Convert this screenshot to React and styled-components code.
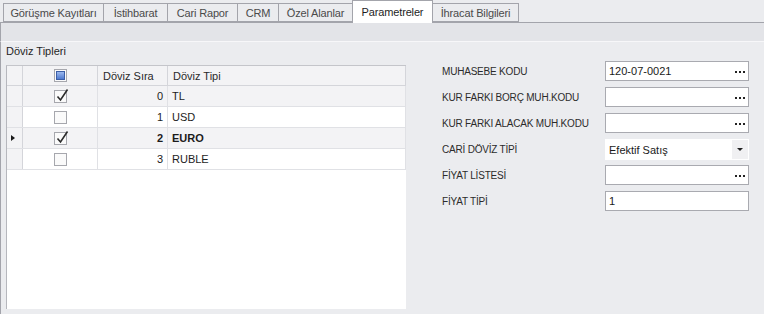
import React from "react";
import styled, { createGlobalStyle } from "styled-components";

const GlobalStyle = createGlobalStyle`
  html, body {
    margin: 0;
    padding: 0;
    background: #ebecef;
  }
  body {
    font-family: "Liberation Sans", Arial, sans-serif;
    font-size: 11px;
    color: #222;
  }
`;

const tabs = [
  { title: "Görüşme Kayıtları", width: 101 },
  { title: "İstihbarat", width: 65 },
  { title: "Cari Rapor", width: 71 },
  { title: "CRM", width: 42 },
  { title: "Özel Alanlar", width: 75 },
  { title: "Parametreler", width: 81 },
  { title: "İhracat Bilgileri", width: 87 },
];

const currencies = [
  { sira: 0, tip: "TL", checked: true },
  { sira: 1, tip: "USD", checked: false },
  { sira: 2, tip: "EURO", checked: true, focused: true },
  { sira: 3, tip: "RUBLE", checked: false },
];

const fields = [
  { label: "MUHASEBE KODU", value: "120-07-0021", kind: "button" },
  { label: "KUR FARKI BORÇ MUH.KODU", value: "", kind: "button" },
  { label: "KUR FARKI ALACAK MUH.KODU", value: "", kind: "button" },
  { label: "CARİ DÖVİZ TİPİ", value: "Efektif Satış", kind: "combo" },
  { label: "FİYAT LİSTESİ", value: "", kind: "button" },
  { label: "FİYAT TİPİ", value: "1", kind: "text" },
];

function App() {
  return (
    <Page>
      <GlobalStyle />
      <TabStrip>
        {tabs.map((t) => (
          <Tab key={t.title} $w={t.width} $active={t.title === "Parametreler"}>
            {t.title}
          </Tab>
        ))}
      </TabStrip>
      <Band />
      <Content>
        <GroupPanel>
          <GroupTitle>Döviz Tipleri</GroupTitle>
          <Grid>
            <HeaderRow>
              <IndicatorCell />
              <HeadCell $center>
                <CheckBox>
                  <BlueFill />
                </CheckBox>
              </HeadCell>
              <HeadCell>Döviz Sıra</HeadCell>
              <HeadCell>Döviz Tipi</HeadCell>
            </HeaderRow>
            {currencies.map((c, i) => (
              <Row key={c.sira} $alt={i % 2 === 0} $bold={c.focused}>
                <IndicatorCell>{c.focused && <Arrow />}</IndicatorCell>
                <Cell $center>
                  <CheckBox>
                    {c.checked && (
                      <svg width="15" height="15" viewBox="0 0 15 15">
                        <path
                          d="M2.5 8.5 L5.5 12 L12.5 1.5"
                          fill="none"
                          stroke="#2b2b2b"
                          strokeWidth="1.6"
                        />
                      </svg>
                    )}
                  </CheckBox>
                </Cell>
                <Cell $right>{c.sira}</Cell>
                <Cell>{c.tip}</Cell>
              </Row>
            ))}
          </Grid>
        </GroupPanel>
        <Form>
          {fields.map((f) => (
            <React.Fragment key={f.label}>
              <Label>{f.label}</Label>
              <Editor $kind={f.kind}>
                <EditorText>{f.value}</EditorText>
                {f.kind === "button" && (
                  <Dots>
                    <i />
                    <i />
                    <i />
                  </Dots>
                )}
                {f.kind === "combo" && (
                  <DropButton>
                    <DownTriangle />
                  </DropButton>
                )}
              </Editor>
            </React.Fragment>
          ))}
        </Form>
      </Content>
    </Page>
  );
}

const Page = styled.div`
  width: 764px;
  height: 314px;
  overflow: hidden;
  background: #ebecef;
`;

const TabStrip = styled.div`
  display: flex;
  align-items: flex-end;
  height: 22px;
  padding-left: 3px;
  border-bottom: 1px solid #a3a4ab;
`;

const Tab = styled.div`
  display: flex;
  align-items: center;
  justify-content: center;
  box-sizing: border-box;
  width: ${(p) => p.$w}px;
  height: ${(p) => (p.$active ? "23px" : "19px")};
  margin-bottom: ${(p) => (p.$active ? "-1px" : "0")};
  margin-left: -1px;
  background: ${(p) => (p.$active ? "#ffffff" : "#ebecef")};
  border: 1px solid #a3a4ab;
  border-bottom: ${(p) => (p.$active ? "none" : "1px solid #a3a4ab")};
  color: ${(p) => (p.$active ? "#1e1e1e" : "#4a4a4a")};
  letter-spacing: -0.15px;
  white-space: nowrap;
  position: relative;
  z-index: ${(p) => (p.$active ? 1 : 0)};
  &:first-child {
    margin-left: 0;
  }
`;

const Band = styled.div`
  height: 18px;
  background: #e3e4e8;
  border-left: 1px solid #a3a4ab;
  border-bottom: 1px solid #f7f7f9;
`;

const Content = styled.div`
  display: flex;
  height: 272px;
  border-left: 1px solid #a3a4ab;
`;

const GroupPanel = styled.div`
  display: flex;
  flex-direction: column;
  padding-left: 5px;
  width: 400px;
`;

const GroupTitle = styled.div`
  height: 22px;
  line-height: 16px;
  padding-top: 1px;
  color: #262626;
`;

const Grid = styled.div`
  height: 244px;
  background: #ffffff;
  border-left: 1px solid #b6b7bd;
  border-top: 1px solid #c4c5ca;
  box-sizing: border-box;
`;

const rowCols = `
  display: grid;
  grid-template-columns: 16px 75px 70px 1fr;
`;

const HeaderRow = styled.div`
  ${rowCols}
  height: 19px;
  background: #f3f3f5;
  border-bottom: 1px solid #d4d5da;
`;

const Row = styled.div`
  ${rowCols}
  height: 20px;
  background: ${(p) => (p.$alt ? "#f3f3f5" : "#ffffff")};
  border-bottom: 1px solid #e0e1e5;
  font-weight: ${(p) => (p.$bold ? "bold" : "normal")};
  color: #1c1c1c;
`;

const IndicatorCell = styled.div`
  display: flex;
  align-items: center;
  justify-content: center;
  background: #f3f3f5;
  border-right: 1px solid #d4d5da;
`;

const HeadCell = styled.div`
  display: flex;
  align-items: center;
  justify-content: ${(p) => (p.$center ? "center" : "flex-start")};
  padding-left: ${(p) => (p.$center ? "0" : "5px")};
  border-right: 1px solid #d4d5da;
  color: #2a2a2a;
`;

const Cell = styled.div`
  display: flex;
  align-items: center;
  justify-content: ${(p) =>
    p.$center ? "center" : p.$right ? "flex-end" : "flex-start"};
  padding: 0 ${(p) => (p.$right ? "4px" : "0")} 0
    ${(p) => (p.$center || p.$right ? "0" : "4px")};
  border-right: 1px solid #e0e1e5;
`;

const CheckBox = styled.div`
  position: relative;
  width: 13px;
  height: 13px;
  box-sizing: border-box;
  border: 1px solid #a6a7ad;
  background: #fafafa;
  display: flex;
  align-items: center;
  justify-content: center;
  svg {
    position: absolute;
    left: 0;
    top: -3px;
  }
`;

const BlueFill = styled.div`
  width: 9px;
  height: 9px;
  box-sizing: border-box;
  border: 1px solid #3c5ea6;
  background: linear-gradient(#9bb8ee, #4f7ad0);
`;

const Arrow = styled.div`
  width: 0;
  height: 0;
  border-top: 3px solid transparent;
  border-bottom: 3px solid transparent;
  border-left: 4px solid #1a1a1a;
  margin-left: -3px;
`;

const Form = styled.div`
  display: grid;
  grid-template-columns: 163px 144px;
  grid-auto-rows: 20px;
  row-gap: 6px;
  margin-left: 36px;
  padding-top: 19px;
  align-content: start;
`;

const Label = styled.div`
  display: flex;
  align-items: center;
  font-size: 10px;
  letter-spacing: -0.2px;
  color: #2b2b2b;
  white-space: nowrap;
`;

const Editor = styled.div`
  display: flex;
  align-items: center;
  box-sizing: border-box;
  background: #ffffff;
  border: 1px solid
    ${(p) => (p.$kind === "combo" ? "#ffffff" : "#a9aab0")};
  height: ${(p) => (p.$kind === "combo" ? "21px" : "20px")};
  padding-left: 3px;
`;

const EditorText = styled.div`
  flex: 1;
  color: #1a1a1a;
  white-space: nowrap;
`;

const Dots = styled.div`
  display: flex;
  gap: 2px;
  margin-right: 3px;
  padding-top: 1px;
  i {
    display: block;
    width: 2px;
    height: 2px;
    background: #222;
  }
`;

const DropButton = styled.div`
  display: flex;
  align-items: center;
  justify-content: center;
  width: 16px;
  height: 100%;
  background: #f0f0f2;
`;

const DownTriangle = styled.div`
  width: 0;
  height: 0;
  border-left: 3px solid transparent;
  border-right: 3px solid transparent;
  border-top: 3px solid #222;
`;

export default App;
